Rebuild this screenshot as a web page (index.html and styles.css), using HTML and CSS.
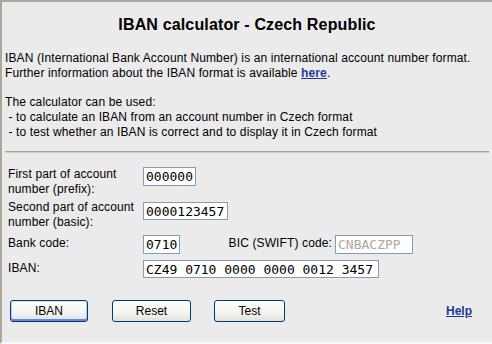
FILE: index.html
```html
<!DOCTYPE html>
<html>
    <head>
        <meta charset="utf-8">
        <title>IBAN calculator - Czech Republic</title>
        <link rel="stylesheet" href="styles.css">
    </head>
    <body>
        <div class="frame">
            <h1 class="title">IBAN calculator - Czech Republic</h1>
            <p class="intro">IBAN (International Bank Account Number) is an international account number format.<br>Further information about the IBAN format is available <a class="link" href="#">here</a>.</p>
            <p class="intro second">The calculator can be used:<br>&nbsp;- to calculate an IBAN from an account number in Czech format<br>&nbsp;- to test whether an IBAN is correct and to display it in Czech format</p>
            <div class="rule"></div>
            <div class="form">
                <div class="row row-prefix">
                    <label class="lbl">First part of account<br>number (prefix):</label>
                    <input class="fld w-prefix" type="text" value="000000">
                </div>
                <div class="row row-basic">
                    <label class="lbl">Second part of account<br>number (basic):</label>
                    <input class="fld w-basic" type="text" value="0000123457">
                </div>
                <div class="row row-bank">
                    <label class="lbl">Bank code:</label>
                    <input class="fld w-bank" type="text" value="0710">
                    <label class="bic-lbl">BIC (SWIFT) code:</label>
                    <input class="fld w-bic" type="text" value="CNBACZPP" disabled>
                </div>
                <div class="row row-iban">
                    <label class="lbl">IBAN:</label>
                    <input class="fld w-iban" type="text" value="CZ49 0710 0000 0000 0012 3457">
                </div>
            </div>
            <div class="actions">
                <button class="btn btn-default" type="button">IBAN</button>
                <button class="btn btn-reset" type="button">Reset</button>
                <button class="btn btn-test" type="button">Test</button>
                <a class="link help" href="#">Help</a>
            </div>
        </div>
    </body>
</html>
```

FILE: styles.css
```css
* {margin: 0px;padding: 0px;box-sizing: border-box;}
body {font-family: "Liberation Sans", Arial, sans-serif;font-size: 12px;color: #000;background-color: #ebebeb;}
.frame {height: 344px;background-color: #ebebeb;border-top: 2px solid #aca899;border-left: 2px solid #aca899;border-bottom: 2px solid #f8f8f6;padding: 14px 3px 0px 3px;}
.title {font-size: 16px;line-height: 18px;font-weight: bold;text-align: center;letter-spacing: 0.15px;}
.intro {line-height: 15px;margin-top: 17px;letter-spacing: 0.12px;}
.intro.second {margin-top: 14px;}
.link {color: #1b3a9a;font-weight: bold;}
.rule {margin-top: 11px;border-top: 1px solid #a8a58f;border-bottom: 1px solid #cfcdbf;}
.form {padding-left: 3px;}
.row {display: flex;align-items: flex-start;}
.lbl {width: 135px;line-height: 15px;letter-spacing: 0.12px;}
.fld {height: 19px;border: 1px solid #7f9db9;background-color: #fff;padding: 0px 2px;font-family: "DejaVu Sans Mono", "Liberation Mono", monospace;font-size: 13px;color: #000;outline: none;}
.row-prefix {margin-top: 14px;}
.row-basic {margin-top: 3px;}
.row-basic .fld {margin-top: 2px;height: 18px;}
.row-bank {margin-top: 5px;}
.row-bank .lbl, .row-iban .lbl, .bic-lbl {margin-top: 1px;}
.row-iban {margin-top: 6px;}
.row-iban .fld {height: 18px;}
.w-prefix {width: 53px;}
.w-basic {width: 85px;}
.w-bank {width: 37px;}
.w-bic {width: 78px;color: #aca899;background-color: #fff;}
.w-iban {width: 236px;}
.bic-lbl {width: 155px;text-align: right;padding-right: 3px;line-height: 15px;letter-spacing: 0.12px;}
.actions {display: flex;align-items: flex-start;margin-top: 22px;padding-left: 5px;padding-right: 17px;}
.btn {height: 22px;border: 1px solid #003c74;border-radius: 3px;background: linear-gradient(#ffffff, #f3f3ef 60%, #e2e1d9);font-family: "Liberation Sans", Arial, sans-serif;font-size: 12px;color: #000;}
.btn-default {width: 78px;box-shadow: inset 0 1px 0 #cee7ff, inset 0 -2px 0 #6982ee, inset 1px 0 0 #b8d0f8, inset -1px 0 0 #b8d0f8;}
.btn-reset {width: 79px;margin-left: 24px;}
.btn-test {width: 71px;margin-left: 23px;}
.help {margin-left: auto;margin-top: 4px;}
```
